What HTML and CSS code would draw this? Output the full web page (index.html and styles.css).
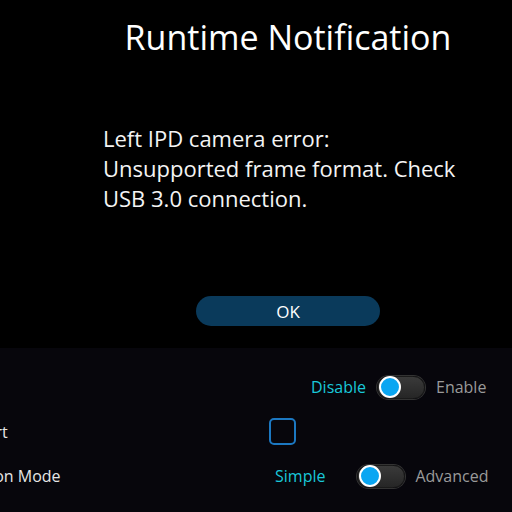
FILE: index.html
```html
<!DOCTYPE html>
<html>
<head>
  <title>Runtime Notification</title>
  <link rel="stylesheet" href="styles.css">
</head>
<body>
  <div class="modal">
    <h1 class="modal-title">Runtime Notification</h1>
    <p class="modal-message">Left IPD camera error:<br>Unsupported frame format. Check USB 3.0 connection.</p>
    <button class="ok-button">OK</button>
  </div>

  <div class="settings">
    <div class="setting-row row-toggle-a">
      <div class="setting-label">Camera</div>
      <div class="toggle-group">
        <span class="toggle-option active">Disable</span>
        <span class="toggle"><span class="toggle-knob"></span></span>
        <span class="toggle-option">Enable</span>
      </div>
    </div>
    <div class="setting-row row-check">
      <div class="setting-label">Autostart</div>
      <span class="checkbox"></span>
    </div>
    <div class="setting-row row-toggle-b">
      <div class="setting-label">Projection Mode</div>
      <div class="toggle-group">
        <span class="toggle-option active">Simple</span>
        <span class="toggle"><span class="toggle-knob"></span></span>
        <span class="toggle-option">Advanced</span>
      </div>
    </div>
  </div>
</body>
</html>
```

FILE: styles.css
```css
html, body {
  margin: 0;
  padding: 0;
  overflow: hidden;
}
body {
  font-family: "Open Sans", "Noto Sans", sans-serif;
  background: #07060c;
  color: #fff;
  width: 512px;
  height: 512px;
}
.modal {
  background: #000;
  height: 348px;
  padding-left: 64px;
  box-sizing: border-box;
  display: flex;
  flex-direction: column;
  align-items: center;
}
.modal-title {
  font-weight: 400;
  font-size: 34px;
  margin: 14px 0 0;
  line-height: 46px;
}
.modal-message {
  width: 370px;
  margin: 63px 0 0;
  font-size: 22px;
  line-height: 30px;
  color: #f4f4f4;
}
.ok-button {
  width: 184px;
  height: 30px;
  margin-top: 83px;
  border: none;
  border-radius: 15px;
  background: #0a3a5b;
  color: #fff;
  font-family: inherit;
  font-size: 17px;
}

.settings {
  padding-top: 17px;
  margin-left: -62px;
}
.setting-row {
  display: flex;
  align-items: center;
  height: 44.5px;
  font-size: 16px;
  color: #e6e6e6;
}
.setting-label {
  width: 0;
  white-space: nowrap;
}
.toggle-group {
  display: flex;
  align-items: center;
}
.toggle-option {
  color: #9a9a9a;
}
.toggle-option.active {
  color: #19c8da;
}
.toggle {
  width: 44px;
  height: 21px;
  border-radius: 12px;
  background: linear-gradient(#3a3a3a, #262626);
  border: 1px solid #1a1a1a;
  box-shadow: 0 0 0 1px #333;
  display: flex;
  align-items: center;
  padding: 0 1px;
}
.toggle-knob {
  width: 18px;
  height: 18px;
  border-radius: 50%;
  background: #0aa6f2;
  border: 2px solid #fff;
}
.row-toggle-a .toggle-group {
  margin-left: 373px;
  gap: 11px;
}
.row-check .checkbox {
  margin-left: 331px;
  width: 23px;
  height: 23px;
  border: 2px solid #1c78c2;
  border-radius: 5px;
}
.row-toggle-b .toggle-group {
  margin-left: 337px;
}
.row-toggle-b .toggle {
  margin: 0 10px 0 32px;
}
```
